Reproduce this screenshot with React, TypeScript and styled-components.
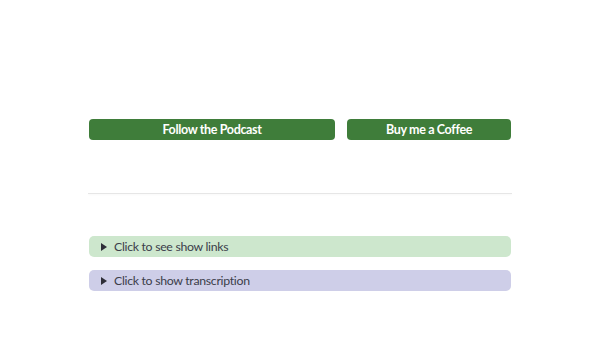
import styled, { createGlobalStyle } from "styled-components";

const GlobalStyle = createGlobalStyle`
  html, body {
    margin: 0;
    padding: 0;
    background: #ffffff;
    font-family: Lato, "Noto Sans", sans-serif;
  }
`;

const Page = styled.main`
  width: 422px;
  margin: 0 auto;
  padding-top: 119px;
  display: flex;
  flex-direction: column;
`;

const ButtonRow = styled.div`
  display: flex;
  gap: 12px;
`;

const ActionButton = styled.a<{ $grow: number }>`
  flex: ${(p) => p.$grow} 1 0;
  height: 21px;
  display: flex;
  align-items: center;
  justify-content: center;
  background: #3f7d3a;
  color: #ffffff;
  border-radius: 4px;
  font-size: 12.5px;
  font-weight: 700;
  letter-spacing: -0.35px;
  text-decoration: none;
  cursor: pointer;
`;

const Divider = styled.hr`
  margin: 53px -1px 0;
  border: none;
  height: 1px;
  background: #e6e6e6;
  box-shadow: 0 1px 2px rgba(0, 0, 0, 0.04);
`;

const DetailsList = styled.div`
  margin-top: 42px;
  display: flex;
  flex-direction: column;
  gap: 13px;
`;

const Details = styled.details<{ $bg: string }>`
  background: ${(p) => p.$bg};
  border-radius: 5px;
`;

const Summary = styled.summary`
  height: 21px;
  display: flex;
  align-items: center;
  gap: 7px;
  padding-left: 12px;
  font-size: 12.3px;
  letter-spacing: -0.3px;
  color: #3b3d4a;
  list-style: none;
  cursor: pointer;

  &::-webkit-details-marker {
    display: none;
  }
`;

const Arrow = styled.span`
  width: 0;
  height: 0;
  border-top: 4px solid transparent;
  border-bottom: 4px solid transparent;
  border-left: 6px solid #2e2e38;
`;

export default function App() {
  return (
    <>
      <GlobalStyle />
      <Page>
        <ButtonRow>
          <ActionButton $grow={3}>Follow the Podcast</ActionButton>
          <ActionButton $grow={2}>Buy me a Coffee</ActionButton>
        </ButtonRow>
        <Divider />
        <DetailsList>
          <Details $bg="#cde7cd">
            <Summary>
              <Arrow />
              Click to see show links
            </Summary>
          </Details>
          <Details $bg="#cecee8">
            <Summary>
              <Arrow />
              Click to show transcription
            </Summary>
          </Details>
        </DetailsList>
      </Page>
    </>
  );
}
